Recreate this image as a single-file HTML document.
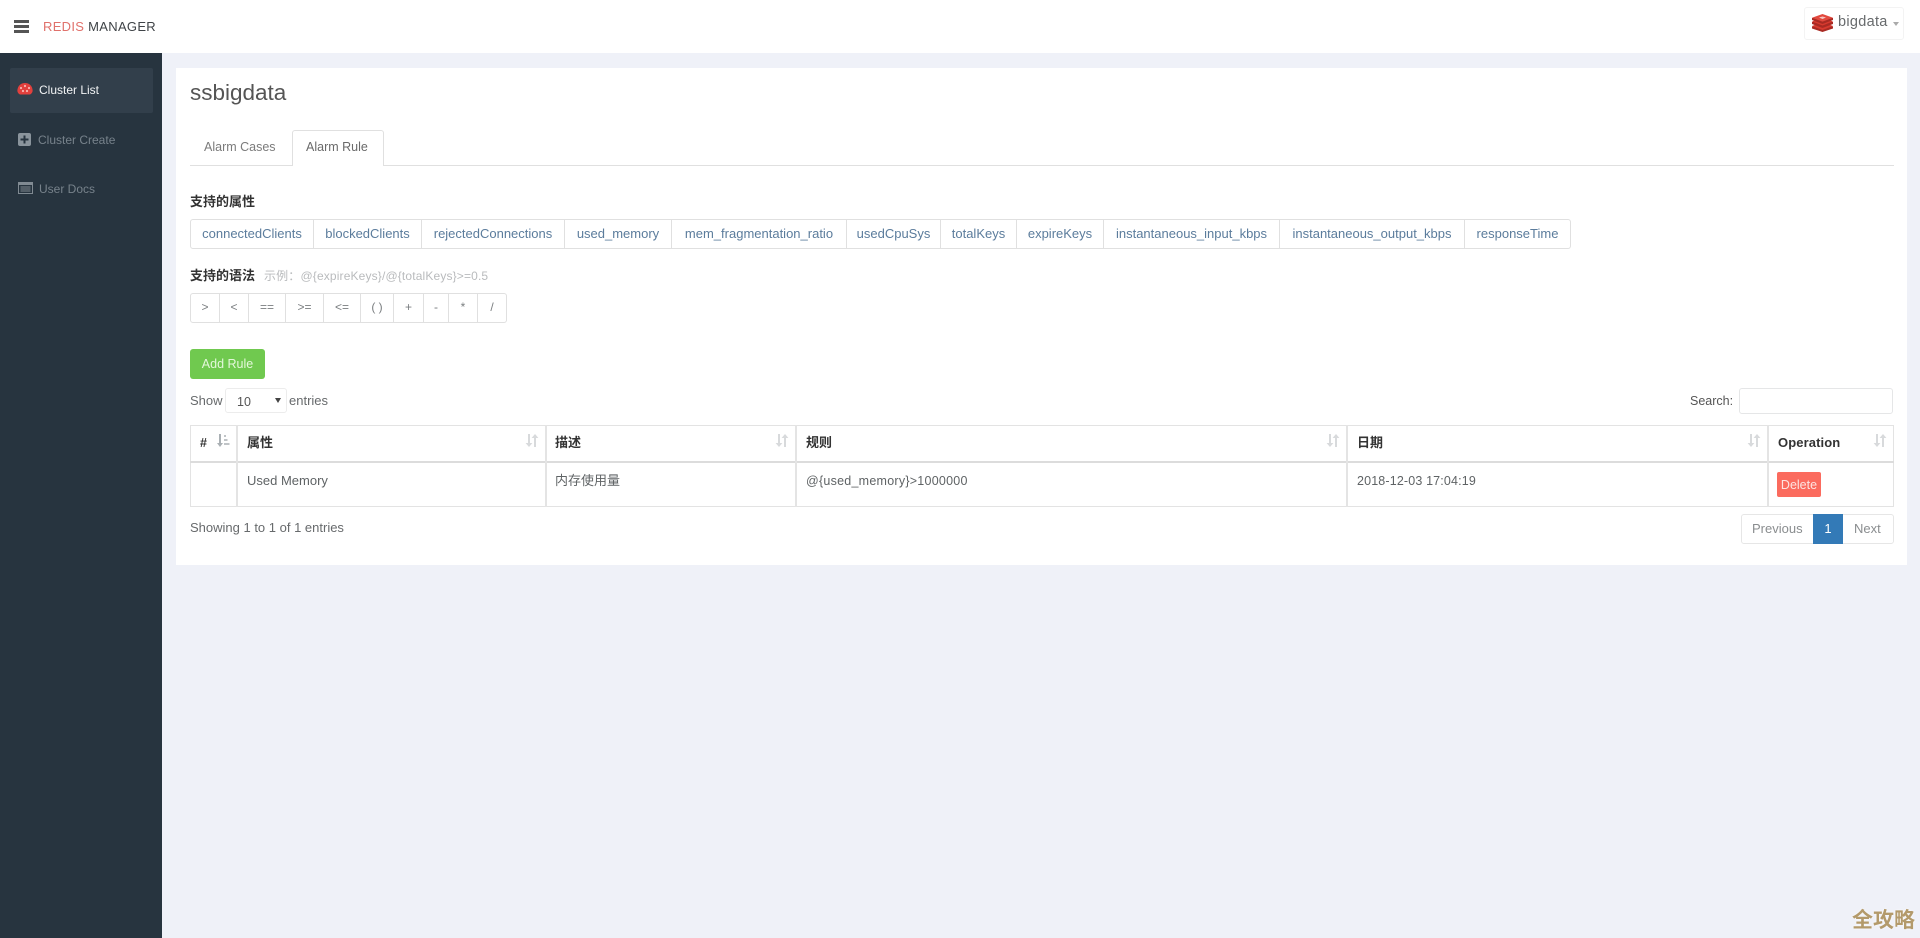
<!DOCTYPE html>
<html><head><meta charset="utf-8"><title>Redis Manager</title>
<style>
html,body{margin:0;padding:0}
body{width:1920px;height:938px;position:relative;overflow:hidden;background:#eff1f8;font-family:"Liberation Sans","Noto Sans CJK SC",sans-serif;font-size:13px;color:#676a6c}
.a,.t{position:absolute}
.t{white-space:nowrap;line-height:18px;letter-spacing:0}
.seg{position:absolute;box-sizing:border-box;border:1px solid #e0e0e0;border-left:0;background:#fff;text-align:center;white-space:nowrap;letter-spacing:0}
.p{top:219px;height:30px;line-height:27px;color:#5b7c9c}
.o{top:293px;height:30px;line-height:26px;color:#7a7e80;font-size:12px}
.first{border-left:1px solid #e0e0e0;border-radius:3px 0 0 3px}
.last{border-radius:0 3px 3px 0}
.cj{font-weight:700;color:#333;letter-spacing:0}
.v{position:absolute;top:425px;height:82px;width:2px;background:#e4e4e4}
.th{font-weight:700;color:#333}
</style></head><body>
<svg width="0" height="0" style="position:absolute"><defs>
<g id="sort" fill="#d8dadc"><path d="M3 0h2v9h2.400L4 13 .6 9H3z"/><path d="M9 13h2V4h2.400L10 0 6.600 4H9z"/></g>
</defs></svg>

<!-- header -->
<div class="a" style="left:0;top:0;width:1920px;height:53px;background:#fff"></div>
<div class="a" style="left:14px;top:20px;width:15px;height:3px;background:#555;box-shadow:0 5px 0 #555,0 10px 0 #555"></div>
<div class="t" style="left:43px;top:18px;font-size:13px;letter-spacing:.3px;color:#e0716b">REDIS <span style="color:#3f4347">MANAGER</span></div>
<div class="a" style="left:1804px;top:7px;width:100px;height:33px;border:1px solid #f3f3f3;box-sizing:border-box;border-radius:3px;background:#fff"></div>
<svg class="a" style="left:1811px;top:14px" width="23" height="18" viewBox="0 0 23 18">
<path d="M1 12.500 11.500 9 22 12.500v2L11.500 18 1 14.500z" fill="#a92a23"/>
<path d="M1 12 11.500 8 22 12 11.500 16z" fill="#d83a2f"/>
<path d="M1 8 11.500 4.500 22 8v2L11.500 14 1 10z" fill="#a92a23"/>
<path d="M1 7.500 11.500 3.500 22 7.500 11.500 11.500z" fill="#d83a2f"/>
<path d="M1 4 11.500 .5 22 4v2L11.500 10 1 6z" fill="#a92a23"/>
<path d="M1 3.800 11.500 0 22 3.800 11.500 7.600z" fill="#e2493e"/>
<path d="M8 3.500 11.500 2.500 15 3.500 11.500 5z" fill="#f4c7c2"/>
</svg>
<div class="t" style="left:1838px;top:13px;font-size:14.500px;color:#676a6c;letter-spacing:.3px">bigdata</div>
<div class="a" style="left:1893px;top:22px;border:3.500px solid transparent;border-top:4px solid #aaa;border-bottom:0"></div>

<!-- sidebar -->
<div class="a" style="left:0;top:53px;width:162px;height:885px;background:#27343f"></div>
<div class="a" style="left:10px;top:68px;width:143px;height:45px;background:#323f4b;border-radius:2px"></div>
<svg class="a" style="left:17px;top:82px" width="16" height="14" viewBox="0 0 16 14">
<path d="M3 12.500C1 11.500 0 9.500 .5 7.500 1 4 3.500 1 8 1s7 3 7.500 6.500c.5 2-.5 4-2.500 5z" fill="#e2403d"/>
<circle cx="4" cy="6" r="1.100" fill="#f7b5b0"/><circle cx="8" cy="4" r="1.100" fill="#f7b5b0"/><circle cx="12" cy="6" r="1.100" fill="#f7b5b0"/><circle cx="6" cy="9" r="1.100" fill="#f7b5b0"/><circle cx="10" cy="9" r="1.100" fill="#f7b5b0"/>
</svg>
<div class="t" style="left:39px;top:81px;font-size:12px;color:#f2f4f5">Cluster List</div>
<svg class="a" style="left:18px;top:133px" width="13" height="13" viewBox="0 0 13 13">
<rect width="13" height="13" rx="2" fill="#8a949c"/><path d="M5.500 2.500h2v3h3v2h-3v3h-2v-3h-3v-2h3z" fill="#27343f"/>
</svg>
<div class="t" style="left:38px;top:131px;font-size:12px;color:#77828b">Cluster Create</div>
<svg class="a" style="left:18px;top:182px" width="15" height="12" viewBox="0 0 15 12">
<rect x=".5" y=".5" width="14" height="11" fill="none" stroke="#808a92"/><rect x="1" y="1" width="13" height="2" fill="#808a92"/><path d="M2.500 5h10M2.500 7h10M2.500 9h10" stroke="#808a92"/>
</svg>
<div class="t" style="left:39px;top:180px;font-size:12px;color:#77828b">User Docs</div>

<!-- card -->
<div class="a" style="left:176px;top:68px;width:1731px;height:497px;background:#fff"></div>
<div class="t" style="left:190px;top:77px;font-size:22.500px;line-height:32px;color:#555">ssbigdata</div>

<!-- tabs -->
<div class="a" style="left:190px;top:165px;width:1704px;height:1px;background:#e0e0e0"></div>
<div class="a" style="left:292px;top:130px;width:92px;height:36px;box-sizing:border-box;border:1px solid #e0e0e0;border-bottom:0;background:#fff;border-radius:3px 3px 0 0"></div>
<div class="t" style="left:204px;top:138px;font-size:12.500px;color:#7b7b7b">Alarm Cases</div>
<div class="t" style="left:306px;top:138px;font-size:12.500px;color:#6a6a6a">Alarm Rule</div>

<div class="t cj" style="left:190px;top:193px">支持的属性</div>
<div class="seg p first" style="left:190px;width:124px">connectedClients</div>
<div class="seg p" style="left:314px;width:108px">blockedClients</div>
<div class="seg p" style="left:422px;width:143px">rejectedConnections</div>
<div class="seg p" style="left:565px;width:107px">used_memory</div>
<div class="seg p" style="left:672px;width:175px">mem_fragmentation_ratio</div>
<div class="seg p" style="left:847px;width:94px">usedCpuSys</div>
<div class="seg p" style="left:941px;width:76px">totalKeys</div>
<div class="seg p" style="left:1017px;width:87px">expireKeys</div>
<div class="seg p" style="left:1104px;width:176px">instantaneous_input_kbps</div>
<div class="seg p" style="left:1280px;width:185px">instantaneous_output_kbps</div>
<div class="seg p last" style="left:1465px;width:106px">responseTime</div>

<div class="t cj" style="left:190px;top:267px">支持的语法</div>
<div class="t" style="left:264px;top:267px;font-size:12px;color:#b9bbbd;letter-spacing:.15px">示例：@{expireKeys}/@{totalKeys}&gt;=0.5</div>
<div class="seg o first" style="left:190px;width:30px">&gt;</div>
<div class="seg o" style="left:220px;width:29px">&lt;</div>
<div class="seg o" style="left:249px;width:37px">==</div>
<div class="seg o" style="left:286px;width:38px">&gt;=</div>
<div class="seg o" style="left:324px;width:37px">&lt;=</div>
<div class="seg o" style="left:361px;width:33px">( )</div>
<div class="seg o" style="left:394px;width:30px">+</div>
<div class="seg o" style="left:424px;width:25px">-</div>
<div class="seg o" style="left:449px;width:29px">*</div>
<div class="seg o last" style="left:478px;width:29px">/</div>

<div class="a" style="left:190px;top:349px;width:75px;height:30px;line-height:31px;background:#70c94f;border-radius:3px;color:#e4f7da;text-align:center;font-size:12.500px">Add Rule</div>

<div class="t" style="left:190px;top:392px">Show</div>
<div class="a" style="left:225px;top:388px;width:62px;height:25px;box-sizing:border-box;border:1px solid #ececec;border-radius:3px;background:#fff"></div>
<div class="t" style="left:237px;top:393px;font-size:12.500px;color:#555">10</div>
<div class="a" style="left:275px;top:398px;border:3.500px solid transparent;border-top:5px solid #444;border-bottom:0"></div>
<div class="t" style="left:289px;top:392px">entries</div>
<div class="t" style="left:1690px;top:392px;font-size:12.500px;color:#555">Search:</div>
<div class="a" style="left:1739px;top:388px;width:154px;height:26px;box-sizing:border-box;border:1px solid #e5e6e7;border-radius:3px;background:#fff"></div>

<!-- table -->
<div class="a" style="left:190px;top:425px;width:1704px;height:82px;box-sizing:border-box;border:1px solid #e3e3e3"></div>
<div class="a" style="left:190px;top:461px;width:1704px;height:2px;background:#dcdcdc"></div>
<div class="v" style="left:236px"></div>
<div class="v" style="left:545px"></div>
<div class="v" style="left:795px"></div>
<div class="v" style="left:1346px"></div>
<div class="v" style="left:1767px"></div>

<div class="t th" style="left:200px;top:434px;font-size:12.500px">#</div>
<svg class="a" style="left:216px;top:434px" width="14" height="13" viewBox="0 0 14 13"><path d="M3 0h2v9h2L4 13 1 9h2z" fill="#aab0b4"/><path d="M8 1h2v2H8zM8 5h3.500v2H8zM8 9h5.500v2H8z" fill="#c0c4c7"/></svg>
<div class="t cj" style="left:247px;top:434px">属性</div>
<svg class="a" style="left:525px;top:434px" width="14" height="13"><use href="#sort"/></svg>
<div class="t cj" style="left:555px;top:434px">描述</div>
<svg class="a" style="left:775px;top:434px" width="14" height="13"><use href="#sort"/></svg>
<div class="t cj" style="left:806px;top:434px">规则</div>
<svg class="a" style="left:1326px;top:434px" width="14" height="13"><use href="#sort"/></svg>
<div class="t cj" style="left:1357px;top:434px">日期</div>
<svg class="a" style="left:1747px;top:434px" width="14" height="13"><use href="#sort"/></svg>
<div class="t th" style="left:1778px;top:434px;letter-spacing:.1px">Operation</div>
<svg class="a" style="left:1873px;top:434px" width="14" height="13"><use href="#sort"/></svg>

<div class="t" style="left:247px;top:472px;color:#5f6365">Used Memory</div>
<div class="t" style="left:555px;top:472px;color:#5f6365;letter-spacing:0">内存使用量</div>
<div class="t" style="left:806px;top:472px;color:#5f6365;font-size:12.500px;letter-spacing:.25px">@{used_memory}&gt;1000000</div>
<div class="t" style="left:1357px;top:472px;color:#5f6365;font-size:12.500px;letter-spacing:.15px">2018-12-03 17:04:19</div>
<div class="a" style="left:1777px;top:472px;width:44px;height:25px;line-height:26px;background:#fb6b5e;border-radius:2px;color:#fde3e0;text-align:center;font-size:12.500px">Delete</div>

<div class="t" style="left:190px;top:519px">Showing 1 to 1 of 1 entries</div>
<div class="a" style="left:1741px;top:514px;width:153px;height:30px;box-sizing:border-box;border:1px solid #e6e6e6;border-radius:3px;background:#fff"></div>
<div class="t" style="left:1752px;top:520px;color:#8a8d8f">Previous</div>
<div class="a" style="left:1813px;top:514px;width:30px;height:30px;line-height:30px;background:#337ab7;color:#fff;text-align:center">1</div>
<div class="t" style="left:1854px;top:520px;color:#8a8d8f">Next</div>

<!-- watermark -->
<div class="t" style="left:1852px;top:907px;font-size:21px;line-height:28px;font-weight:700;color:#b39a6b;letter-spacing:0;text-shadow:0 0 2px #fff">全攻略</div>
</body></html>
